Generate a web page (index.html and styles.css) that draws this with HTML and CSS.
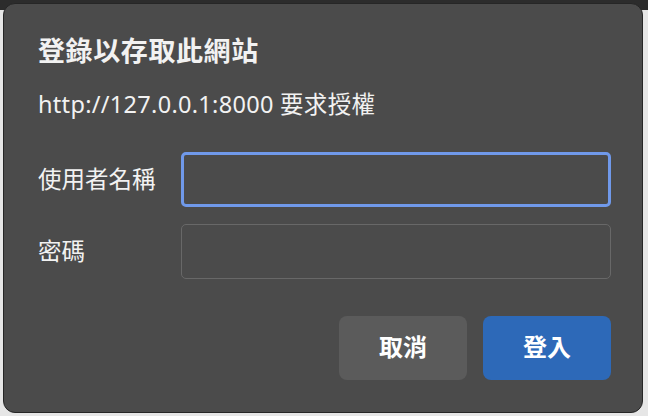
FILE: index.html
```html
<!DOCTYPE html>
<html lang="zh-Hant">
<head>
    <meta charset="UTF-8">
    <meta name="viewport" content="width=device-width, initial-scale=1.0">
    <title>登錄以存取此網站</title>
    <link rel="stylesheet" href="styles.css">
</head>
<body>

    <!-- Auth Dialog -->
    <div class="dialog">
        <h1 class="title">登錄以存取此網站</h1>
        <p class="subtitle">http://127.0.0.1:8000 要求授權</p>

        <div class="fields">
            <label class="field-label" for="username">使用者名稱</label>
            <input type="text" id="username" class="field-input focused">

            <label class="field-label" for="password">密碼</label>
            <input type="password" id="password" class="field-input">
        </div>

        <div class="actions">
            <button class="btn btn-cancel">取消</button>
            <button class="btn btn-login">登入</button>
        </div>
    </div>

</body>
</html>
```

FILE: styles.css
```css
/* Global Styles */
* {
    margin: 0;
    padding: 0;
    box-sizing: border-box;
}

body {
    font-family: 'Noto Sans', 'Noto Sans CJK TC', sans-serif;
    width: 648px;
    height: 416px;
    padding: 3px 5px 3px 3px;
    overflow: hidden;
    color: #f2f2f2;
    background: linear-gradient(to bottom, #2c2c2c 0, #2c2c2c 10px, #e6e6e6 10px);
}

/* Dialog */
.dialog {
    width: 640px;
    height: 410px;
    padding: 30px 31px 0 34px;
    background-color: #4b4b4b;
    border: 1px solid #262626;
    border-radius: 12px;
}

.title {
    font-size: 27px;
    font-weight: bold;
    line-height: 34px;
    letter-spacing: 0.6px;
}

.subtitle {
    margin-top: 21px;
    font-size: 23.5px;
    line-height: 31px;
    letter-spacing: 0.3px;
}

/* Form fields */
.fields {
    display: grid;
    grid-template-columns: 143px 1fr;
    row-gap: 17px;
    align-items: center;
    margin-top: 32px;
}

.field-label {
    font-size: 23.5px;
    padding-bottom: 4px;
}

.field-input {
    height: 55px;
    width: 100%;
    background-color: #4b4b4b;
    border: 1px solid #686868;
    border-radius: 5px;
    color: #f2f2f2;
    font-size: 20px;
    padding: 0 12px;
    outline: none;
}

.field-input.focused {
    border: 3px solid #7099ea;
}

/* Buttons */
.actions {
    display: flex;
    justify-content: flex-end;
    gap: 16px;
    margin-top: 37px;
}

.btn {
    width: 128px;
    height: 64px;
    padding-bottom: 5px;
    border: none;
    border-radius: 8px;
    color: #ffffff;
    font-family: 'Noto Sans', 'Noto Sans CJK TC', sans-serif;
    font-size: 24px;
    font-weight: bold;
    cursor: pointer;
}

.btn-cancel {
    background-color: #5b5b5b;
}

.btn-login {
    background-color: #2d69b8;
}
```
